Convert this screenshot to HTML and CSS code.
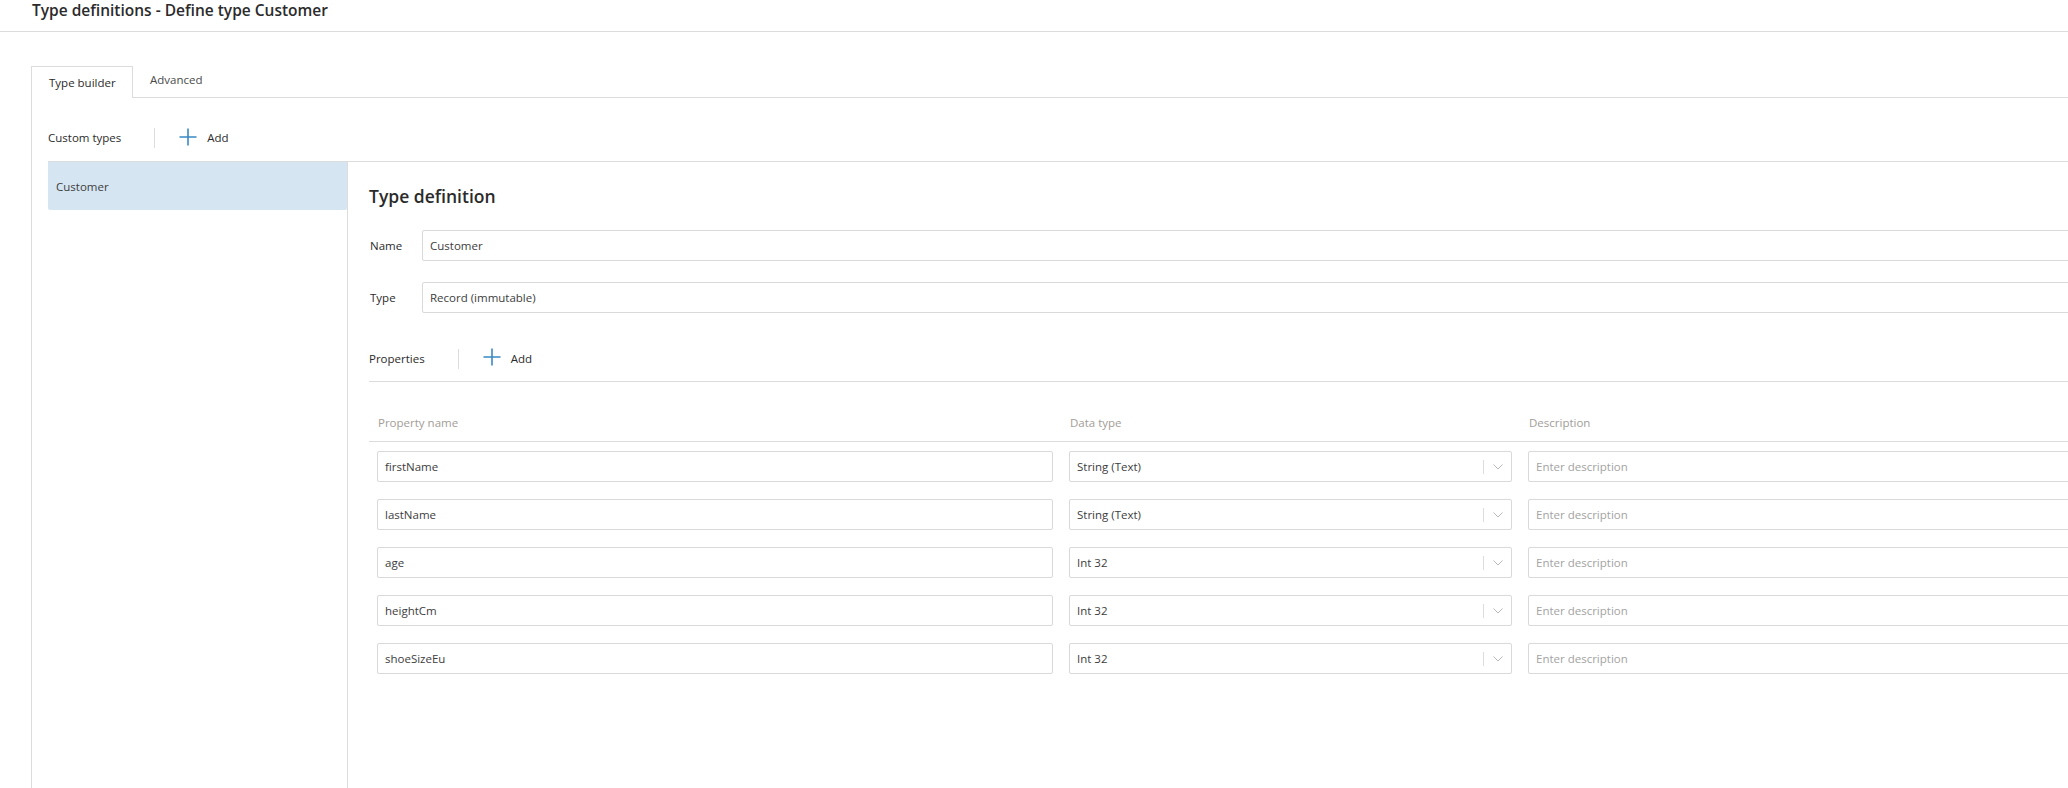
FILE: index.html
```html
<!DOCTYPE html>
<html lang="en">
<head>
<meta charset="utf-8">
<title>Type definitions - Define type Customer</title>
<link rel="stylesheet" href="styles.css">
</head>
<body>
<div class="page">
  <header class="page-header">
    <h1 class="page-title">Type definitions - Define type Customer</h1>
  </header>
  <main class="main">
    <nav class="tabs">
      <div class="tab tab-active">Type builder</div>
      <div class="tab">Advanced</div>
    </nav>
    <section class="tab-panel">
      <div class="toolbar">
        <span class="toolbar-label">Custom types</span>
        <span class="toolbar-divider"></span>
        <span class="add-btn">
          <svg class="plus" width="18" height="18" viewBox="0 0 18 18"><path d="M9 0.5V17.5M0.5 9H17.5" stroke="#3a89c3" stroke-width="1.6" fill="none"/></svg>
          <span class="add-text">Add</span>
        </span>
      </div>
      <div class="split">
        <aside class="type-list">
          <div class="type-item selected">Customer</div>
        </aside>
        <div class="editor">
          <h2 class="editor-title">Type definition</h2>
          <div class="field">
            <span class="field-label">Name</span>
            <div class="textbox">Customer</div>
          </div>
          <div class="field field-second">
            <span class="field-label">Type</span>
            <div class="textbox">Record (immutable)</div>
          </div>
          <div class="toolbar toolbar-props">
            <span class="toolbar-label">Properties</span>
            <span class="toolbar-divider"></span>
            <span class="add-btn">
              <svg class="plus" width="18" height="18" viewBox="0 0 18 18"><path d="M9 0.5V17.5M0.5 9H17.5" stroke="#3a89c3" stroke-width="1.6" fill="none"/></svg>
              <span class="add-text">Add</span>
            </span>
          </div>
          <div class="prop-table">
            <div class="prop-row prop-head">
              <div class="head-cell">Property name</div>
              <div class="head-cell">Data type</div>
              <div class="head-cell">Description</div>
            </div>
            <div class="prop-row">
              <div class="cell"><div class="textbox">firstName</div></div>
              <div class="cell"><div class="dropdown"><span class="dropdown-text">String (Text)</span><span class="dropdown-divider"></span><span class="dropdown-caret"><svg width="10" height="6" viewBox="0 0 10 6"><path d="M0.5 0.5L5 5L9.5 0.5" stroke="#b8b8b8" stroke-width="1" fill="none"/></svg></span></div></div>
              <div class="cell"><div class="textbox placeholder">Enter description</div></div>
            </div>
            <div class="prop-row">
              <div class="cell"><div class="textbox">lastName</div></div>
              <div class="cell"><div class="dropdown"><span class="dropdown-text">String (Text)</span><span class="dropdown-divider"></span><span class="dropdown-caret"><svg width="10" height="6" viewBox="0 0 10 6"><path d="M0.5 0.5L5 5L9.5 0.5" stroke="#b8b8b8" stroke-width="1" fill="none"/></svg></span></div></div>
              <div class="cell"><div class="textbox placeholder">Enter description</div></div>
            </div>
            <div class="prop-row">
              <div class="cell"><div class="textbox">age</div></div>
              <div class="cell"><div class="dropdown"><span class="dropdown-text">Int 32</span><span class="dropdown-divider"></span><span class="dropdown-caret"><svg width="10" height="6" viewBox="0 0 10 6"><path d="M0.5 0.5L5 5L9.5 0.5" stroke="#b8b8b8" stroke-width="1" fill="none"/></svg></span></div></div>
              <div class="cell"><div class="textbox placeholder">Enter description</div></div>
            </div>
            <div class="prop-row">
              <div class="cell"><div class="textbox">heightCm</div></div>
              <div class="cell"><div class="dropdown"><span class="dropdown-text">Int 32</span><span class="dropdown-divider"></span><span class="dropdown-caret"><svg width="10" height="6" viewBox="0 0 10 6"><path d="M0.5 0.5L5 5L9.5 0.5" stroke="#b8b8b8" stroke-width="1" fill="none"/></svg></span></div></div>
              <div class="cell"><div class="textbox placeholder">Enter description</div></div>
            </div>
            <div class="prop-row">
              <div class="cell"><div class="textbox">shoeSizeEu</div></div>
              <div class="cell"><div class="dropdown"><span class="dropdown-text">Int 32</span><span class="dropdown-divider"></span><span class="dropdown-caret"><svg width="10" height="6" viewBox="0 0 10 6"><path d="M0.5 0.5L5 5L9.5 0.5" stroke="#b8b8b8" stroke-width="1" fill="none"/></svg></span></div></div>
              <div class="cell"><div class="textbox placeholder">Enter description</div></div>
            </div>
          </div>
        </div>
      </div>
    </section>
  </main>
</div>
</body>
</html>
```
FILE: styles.css
```css
html, body {
  margin: 0;
  padding: 0;
  overflow: hidden;
  background: #fff;
}

body {
  font-family: "Open Sans", "Noto Sans", sans-serif;
  font-size: 11.5px;
  color: #333;
}

* {
  box-sizing: border-box;
}

.page {
  width: 100%;
  height: 788px;
  display: flex;
  flex-direction: column;
  overflow: hidden;
}

.page-header {
  height: 32px;
  border-bottom: 1px solid #dcdcdc;
  padding-left: 32px;
}

.page-title {
  margin: 0;
  font-size: 15.5px;
  font-weight: 600;
  line-height: 21px;
  color: #2b2b2b;
}

.main {
  flex: 1;
  min-height: 0;
  display: flex;
  flex-direction: column;
  padding: 34px 0 0 31px;
}

.tabs {
  display: flex;
  align-items: flex-start;
  height: 32px;
  border-bottom: 1px solid #dcdcdc;
}

.tab {
  height: 31px;
  padding: 5px 17px 0 17px;
  line-height: 18px;
  color: #4a4a4a;
  white-space: nowrap;
}

.tab-active {
  width: 102px;
  height: 32px;
  padding: 7px 0 0 17px;
  border: 1px solid #dcdcdc;
  border-bottom: 0;
  background: #fff;
  color: #2b2b2b;
}

.tab-panel {
  flex: 1;
  min-height: 0;
  display: flex;
  flex-direction: column;
  border-left: 1px solid #dcdcdc;
  padding-left: 16px;
}

.toolbar {
  display: flex;
  align-items: center;
  height: 20px;
  margin-top: 30px;
  margin-bottom: 13px;
  flex-shrink: 0;
}

.toolbar-label {
  color: #2b2b2b;
  line-height: 18px;
  white-space: nowrap;
}

.toolbar-divider {
  width: 1px;
  height: 20px;
  background: #dcdcdc;
  margin-left: 33px;
}

.add-btn {
  display: flex;
  align-items: center;
  margin-left: 24px;
  color: #2b2b2b;
}

.plus {
  display: block;
  margin-top: -3px;
}

.add-text {
  margin-left: 10px;
  line-height: 18px;
}

.split {
  flex: 1;
  min-height: 0;
  display: flex;
  border-top: 1px solid #dcdcdc;
}

.type-list {
  width: 300px;
  flex-shrink: 0;
  border-right: 1px solid #dcdcdc;
}

.type-item {
  height: 48px;
  display: flex;
  align-items: center;
  padding-left: 8px;
  color: #3d3d3d;
}

.type-item.selected {
  background: #d5e6f2;
  border-bottom-left-radius: 2px;
  border-bottom-right-radius: 2px;
}

.editor {
  flex: 1;
  min-width: 0;
  overflow: hidden;
  padding: 22px 0 0 21px;
}

.editor-title {
  margin: 0;
  font-size: 17.5px;
  font-weight: 600;
  line-height: 24px;
  color: #2b2b2b;
}

.field {
  display: flex;
  align-items: center;
  margin-top: 22px;
  margin-right: -40px;
}

.field-second {
  margin-top: 21px;
}

.field-label {
  width: 53px;
  flex-shrink: 0;
  padding-left: 1px;
  color: #2b2b2b;
}

.field .textbox {
  flex: 1;
}

.textbox {
  height: 31px;
  display: flex;
  align-items: center;
  padding: 0 7px;
  border: 1px solid #d9d9d9;
  border-radius: 2px;
  background: #fff;
  color: #3d3d3d;
  white-space: nowrap;
}

.textbox.placeholder {
  color: #a3a3a3;
}

.toolbar-props {
  margin-top: 36px;
  margin-bottom: 0;
  height: 33px;
  padding-bottom: 13px;
  border-bottom: 1px solid #dcdcdc;
}

.prop-row {
  display: grid;
  grid-template-columns: 692px 459px 692px;
}

.prop-head {
  border-bottom: 1px solid #dcdcdc;
}

.head-cell {
  padding: 32px 8px 9px 9px;
  line-height: 18px;
  color: #a29d98;
}

.cell {
  padding: 9px 8px 8px 8px;
}

.dropdown {
  height: 31px;
  display: flex;
  align-items: center;
  padding-left: 7px;
  border: 1px solid #d9d9d9;
  border-radius: 2px;
  background: #fff;
  color: #3d3d3d;
}

.dropdown-text {
  flex: 1;
}

.dropdown-divider {
  width: 1px;
  height: 14px;
  background: #dcdcdc;
}

.dropdown-caret {
  width: 27px;
  display: flex;
  justify-content: center;
  align-items: center;
}

.dropdown-caret svg {
  display: block;
}
```
